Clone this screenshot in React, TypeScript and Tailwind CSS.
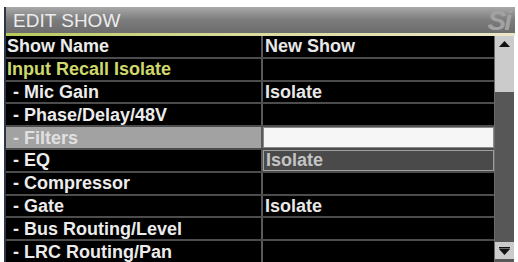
import React from "react";

type Row = {
  left: string;
  right?: string;
  kind?: "head" | "yellow" | "sub";
  sel?: "filters" | "eq";
};

const rows: Row[] = [
  { left: "Show Name", right: "New Show", kind: "head" },
  { left: "Input Recall Isolate", kind: "yellow" },
  { left: "- Mic Gain", right: "Isolate", kind: "sub" },
  { left: "- Phase/Delay/48V", kind: "sub" },
  { left: "- Filters", kind: "sub", sel: "filters" },
  { left: "- EQ", right: "Isolate", kind: "sub", sel: "eq" },
  { left: "- Compressor", kind: "sub" },
  { left: "- Gate", right: "Isolate", kind: "sub" },
  { left: "- Bus Routing/Level", kind: "sub" },
  { left: "- LRC Routing/Pan", kind: "sub" },
];

export default function App() {
  return (
    <div
      className="w-[518px] h-[262px] bg-white overflow-hidden pt-[7px] pl-[4px]"
      style={{ fontFamily: '"Liberation Sans", Arial, sans-serif' }}
    >
      <div className="w-[511px] border-l-2 border-[#2e3646] flex flex-col">
        {/* Title bar */}
        <div className="relative h-[26px] flex items-center pl-[7px] bg-gradient-to-b from-[#a9a9a9] via-[#7c7c7c] to-[#6c6c6c]">
          <span className="text-[19px] leading-none text-[#ececec]">EDIT SHOW</span>
          <span className="absolute right-[5px] top-[0px] text-[28px] leading-none italic font-bold text-[#a2a2a2] tracking-[-2px]">
            Si
          </span>
        </div>
        <div className="h-[3px] bg-gradient-to-r from-[#b8ca5c] via-[#dcdca0] to-[#ece6c8]" />
        {/* Body */}
        <div className="flex">
          <div className="w-[489px] bg-black border-r border-[#6a6a6a]">
            {rows.map((r, i) => {
              const leftColor =
                r.kind === "yellow" ? "text-[#cfd86c]" : r.sel === "filters" ? "text-[#e0e0e0]" : "text-[#ececec]";
              return (
                <div key={i} className="flex h-[22.8px] border-b-2 border-[#4c4c4c]">
                  <div
                    className={`w-[255px] flex items-center text-[18px] font-bold leading-none ${leftColor} ${
                      r.kind === "sub" ? "pl-[7px]" : "pl-[1px]"
                    } ${r.sel === "filters" ? "bg-[#a2a2a2]" : ""}`}
                  >
                    {r.left}
                  </div>
                  <div className="w-[2px] bg-[#5a5a5a]" />
                  <div
                    className={`flex-1 flex items-center pl-[2px] text-[18px] font-bold leading-none ${
                      r.sel === "filters"
                        ? "bg-[#f6f6f6] border border-[#8a8a8a]"
                        : r.sel === "eq"
                        ? "bg-[#4a4a4a] border border-[#a0a0a0] text-[#c4c4c4]"
                        : "text-[#e8e8e8]"
                    }`}
                  >
                    {r.right ?? ""}
                  </div>
                </div>
              );
            })}
          </div>
          {/* Scrollbar */}
          <div className="w-[19px] flex flex-col bg-[#575757] h-[226px]">
            <div className="h-[56px] bg-[#cbcbcb] flex justify-center pt-[5px]">
              <svg width="11" height="7" viewBox="0 0 11 7">
                <polygon points="5.5,0 11,6 0,6" fill="#111" />
              </svg>
            </div>
            <div className="flex-1" />
            <div className="h-[17px] bg-[#cbcbcb] flex justify-center items-center mb-[3px]">
              <svg width="11" height="8" viewBox="0 0 11 8">
                <rect x="0" y="0" width="11" height="1.5" fill="#111" />
                <polygon points="0,2 11,2 5.5,8" fill="#111" />
              </svg>
            </div>
          </div>
        </div>
      </div>
    </div>
  );
}
